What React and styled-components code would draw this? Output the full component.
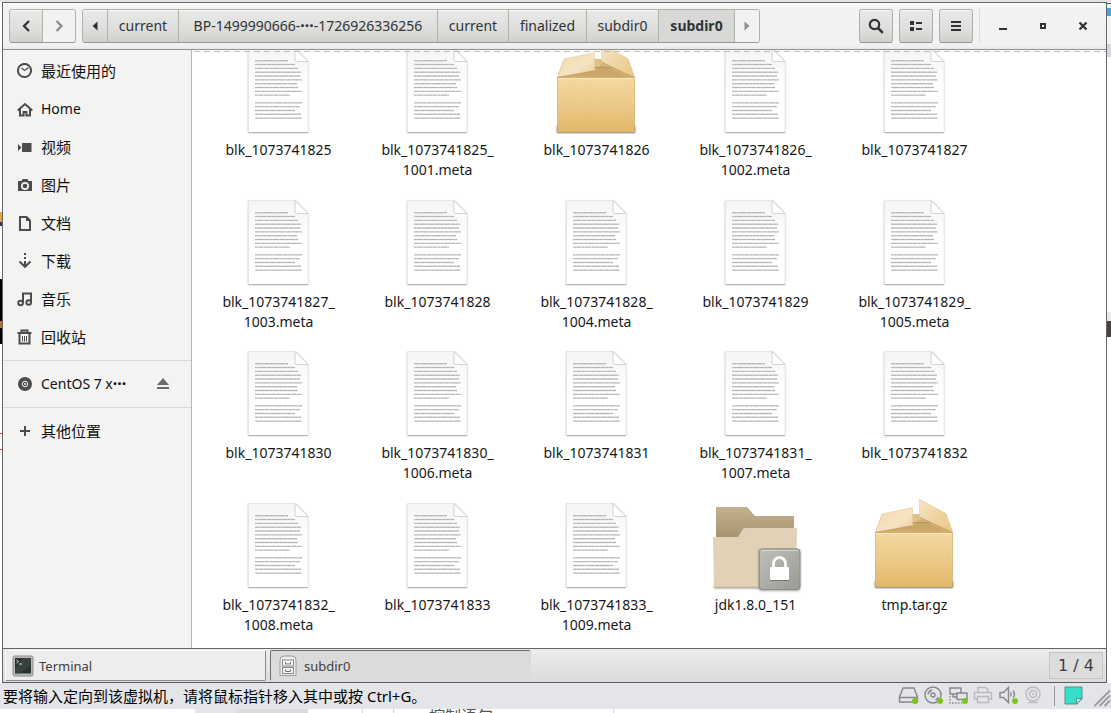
import React from "react";
import styled, { createGlobalStyle, css } from "styled-components";

const uiFont = `"Noto Sans", "Noto Sans CJK SC", sans-serif`;

const GlobalStyle = createGlobalStyle`
  *, *::before, *::after { box-sizing: border-box; }
  html, body { margin: 0; padding: 0; }
  body { font-family: ${uiFont}; font-size: 14px; color: #1c1f20; background: #fff; overflow: hidden; }
  button { font: inherit; color: inherit; margin: 0; padding: 0; border: 0; background: none; cursor: pointer; }
  ul, ol { list-style: none; margin: 0; padding: 0; }
  a { color: inherit; text-decoration: none; }
  svg { display: block; flex: none; }
`;

/* ---------- page frame ---------- */
const Page = styled.div`
  display: flex;
  flex-direction: column;
  height: 100vh;
`;
const Desktop = styled.div`
  flex: 1;
  min-height: 0;
  display: grid;
  grid-template-columns: 2px minmax(0, 1fr) 4px;
`;
const LeftEdge = styled.div`
  background: linear-gradient(
    #fff 210px, #f0a040 210px 220px, #223a66 220px 224px, #fff 224px 277px,
    #000 277px 319px, #b87420 319px 326px, #000 326px 342px, #fff 342px 431px,
    #e33 431px 432px, #fff 432px 447px, #e33 447px 448px, #fff 448px);
`;
const RightEdge = styled.div`
  background: linear-gradient(
    #eee 1px, #c33 1px 2px, #eee 2px 6px, #4aa3df 6px 14px, #f4f4f4 14px 42px,
    #d8d8dc 42px 55px, #fff 55px 310px, #e8e8e8 310px 319px, #45433a 319px 335px, #fff 335px);
`;
const Frame = styled.div`
  display: flex;
  flex-direction: column;
  min-width: 0;
  min-height: 0;
  border: 1px solid #666;
  border-bottom-color: #5c5c5c;
`;
const TopStrip = styled.div`
  height: 2px;
  background: #e3e3e3;
`;

/* ---------- header bar ---------- */
const HeaderBar = styled.header`
  display: flex;
  align-items: center;
  height: 47px;
  padding: 0 3px 0 6px;
  background: linear-gradient(#fcfcfc, #f3f3f3 4px, #f2f2f2 42px, #e8e8e8);
  border-bottom: 1px solid #92928e;
`;
const raised = css`
  background: linear-gradient(#e9e9e7, #dededc 60%, #d0d0cd);
  box-shadow: inset 0 1px #f8f8f7;
`;
const ButtonGroup = styled.nav`
  display: flex;
  height: 34px;
  margin-right: 6px;
  border: 1px solid #b1b1ae;
  border-bottom-color: #979792;
  border-radius: 3px;
  overflow: hidden;
`;
const GroupButton = styled.button`
  display: flex;
  align-items: center;
  justify-content: center;
  width: ${(p) => p.$w}px;
  line-height: 20px;
  color: #2e3436;
  white-space: nowrap;
  ${raised}
  & + & { border-left: 1px solid #b1b1ae; }
  ${(p) => p.$current && css`
    background: #d8d8d6;
    box-shadow: none;
    font-weight: 700;
  `}
  &:disabled { background: #f2f2f1; box-shadow: none; color: #8b8e8f; }
`;
const Ellipsis = styled.span`
  font-size: 16px;
  font-weight: 700;
  line-height: 16px;
`;
const Spacer = styled.div`
  flex: 1;
`;
const ToolButton = styled.button`
  display: flex;
  align-items: center;
  justify-content: center;
  width: 34px;
  height: 34px;
  margin-right: 6px;
  border: 1px solid #b1b1ae;
  border-bottom-color: #979792;
  border-radius: 3px;
  color: #2e3436;
  ${raised}
`;
const WindowControls = styled.div`
  display: flex;
  height: 34px;
  border-left: 1px solid #dcdcda;
  padding-left: 3px;
`;
const WindowButton = styled.button`
  display: flex;
  align-items: center;
  justify-content: center;
  width: 40px;
  color: #2e3436;
`;

/* ---------- body ---------- */
const Body = styled.div`
  flex: 1;
  min-height: 0;
  display: flex;
`;
const Sidebar = styled.nav`
  width: 189px;
  padding-top: 2px;
  background: #f3f3f2;
  border-right: 1px solid #b6b6b3;
`;
const PlaceGroup = styled.ul`
  & + & {
    margin-top: 4px;
    padding-top: 4px;
    border-top: 1px solid #dadad8;
  }
`;
const Place = styled.li`
  display: flex;
  align-items: center;
  height: 38px;
  padding: 0 20px 0 14px;
`;
const PlaceLink = styled.a`
  flex: 1;
  display: flex;
  align-items: center;
  gap: 8px;
  font-size: ${(p) => (p.$cjk ? 15 : 14)}px;
  line-height: 20px;
  color: #111;
  white-space: nowrap;
  svg { color: #4b4d4d; }
`;
const EjectButton = styled.button`
  color: #686c6d;
`;
const Files = styled.main`
  flex: 1;
  min-width: 0;
  overflow: hidden;
  background: #fff;
`;
const ScrollEdge = styled.div`
  position: relative;
  height: 1px;
  margin-top: 1px;
  z-index: 1;
  background: repeating-linear-gradient(90deg, transparent 0 2px, #bdbdbb 2px 8px, transparent 8px 10px);
`;
const FileGrid = styled.ul`
  display: grid;
  grid-template-columns: repeat(auto-fill, 159px);
  grid-auto-rows: 152px 151px;
  padding: 0 112px 0 7px;
  margin-top: -8px;
`;
const FileItem = styled.li`
  display: flex;
  flex-direction: column;
  align-items: center;
  text-align: center;
  svg { margin-right: 2px; }
`;
const FileName = styled.span`
  line-height: 20px;
  color: #161819;
  white-space: pre-line;
`;

/* ---------- taskbar ---------- */
const Taskbar = styled.footer`
  display: flex;
  align-items: center;
  gap: 4px;
  height: 34px;
  padding: 0 3px 0 2px;
  background: linear-gradient(#ececec, #dcdcdc);
  border-top: 1px solid #666;
`;
const Task = styled.button`
  display: flex;
  align-items: center;
  gap: 5px;
  width: 261px;
  height: 31px;
  padding-left: 6px;
  font-size: 13px;
  color: #3c4042;
  text-align: left;
  background: #ededed;
  border: 1px solid #8c8c8c;
  border-top-color: #fafafa;
  border-left-color: #fafafa;
  border-radius: 2px;
  ${(p) => p.$active && css`
    background: #dbdbdb;
    border-color: #6e6e6e #dbdbdb #dbdbdb #6e6e6e;
  `}
`;
const Pager = styled.button`
  width: 54px;
  height: 27px;
  font-family: "DejaVu Sans", sans-serif;
  font-size: 16px;
  line-height: 20px;
  color: #3c4042;
  background: #dddddd;
  border: 1px solid #c4c4c4;
`;

/* ---------- host status line ---------- */
const StatusBar = styled.div`
  display: flex;
  align-items: center;
  justify-content: space-between;
  height: 26px;
  padding-left: 3px;
  background: #e4e5e8;
`;
const StatusText = styled.p`
  margin: 0;
  font-size: 15px;
  line-height: 24px;
  color: #000;
  white-space: nowrap;
`;
const Devices = styled.div`
  display: flex;
  align-items: center;
  gap: 3px;
`;
const Divider = styled.span`
  width: 1px;
  height: 20px;
  margin: 0 6px;
  background: #9b9ca0;
`;
const HostStrip = styled.div`
  display: flex;
  height: 4px;
  overflow: hidden;
  padding-left: 195px;
  background: #fff;
  font-size: 16px;
  line-height: 14px;
  color: #555;
`;
const HostCell = styled.span`
  width: ${(p) => p.$w}px;
  height: 4px;
  background: ${(p) => p.$bg};
  border-right: 1px solid #d6d6d9;
  padding-left: ${(p) => (p.$text ? 35 : 0)}px;
`;

/* ---------- drawings ---------- */
const Svg = ({ s = 16, children, ...rest }) => (
  <svg width={s} height={s} viewBox={`0 0 ${s} ${s}`} fill="none" aria-hidden="true" {...rest}>
    {children}
  </svg>
);
const ink = { stroke: "currentColor", strokeWidth: 2 };

const icons = {
  recent: <><circle cx="7.5" cy="7.5" r="6.6" {...ink} /><path d="M4.5 5 7.5 7.5 11.5 4.5" stroke="currentColor" strokeWidth="1.2" /></>,
  home: <><path d="M.7 9.4 8 3l7.3 6.4" {...ink} /><path d="M3 8v6.500h3.600V11h2.800v3.500H13V8" {...ink} /></>,
  video: <path d="M5 4h9.500v9H5zM1 5l3.500 3.500L1 12z" fill="currentColor" />,
  photo: <><path fillRule="evenodd" d="M1 4h3.500l1-2h5l1 2H15v10H1zM8 5a4 4 0 1 0 0 8 4 4 0 0 0 0-8z" fill="currentColor" /><circle cx="8" cy="9" r="2.300" fill="currentColor" /></>,
  doc: <><path d="M3 2h6.500L13 5.500V15H3z" {...ink} /><path d="M9 1v5h5z" fill="currentColor" /></>,
  download: <><path d="M8 0v2M8 4v2M8 8v6" {...ink} /><path d="M2.500 8.500 8 13.800l5.500-5.300" {...ink} /></>,
  music: <><path d="M6 12V2.500h8V11" {...ink} /><circle cx="3.600" cy="12" r="2.300" {...ink} /><circle cx="11.700" cy="11.500" r="2.300" {...ink} /></>,
  trash: <><path d="M.500 4h14M4.500 3V1.500h6V3" {...ink} /><path d="M2.500 5v9.500h10V5" {...ink} /><path d="M5.500 7v5.500M7.500 7v5.500M9.500 7v5.500" stroke="currentColor" strokeWidth="1" /></>,
  disc: <><circle cx="8" cy="8" r="7" fill="currentColor" /><circle cx="8" cy="8" r="2.800" stroke="#f3f3f2" strokeWidth="1" /><circle cx="8" cy="8" r="1" fill="#f3f3f2" /></>,
  plus: <path d="M8 3v10M3 8h10" {...ink} />,
};

const DocumentIcon = () => (
  <Svg s={96}>
    <defs>
      <linearGradient id="paper" x1="0" y1="0" x2="0" y2="1">
        <stop offset="0" stopColor="#f5f5f3" /><stop offset=".5" stopColor="#fff" />
      </linearGradient>
      <filter id="soft"><feGaussianBlur stdDeviation=".8" /></filter>
    </defs>
    <path d="M18 5h48l12 13v71H18z" fill="#999" opacity=".5" filter="url(#soft)" />
    <path d="M18.500 4.500h46.500l13 13V88.500H18.500z" fill="url(#paper)" stroke="#e0e0de" strokeWidth=".6" />
    <path d="M18.500 88.500H78" stroke="#b4b4b4" />
    <path d="M65 4.500 78 17.500H66.500q-1.500 0-1.500-1.500z" fill="#fff" stroke="#c8c8c6" strokeWidth=".8" />
    {[33, 40, 43, 46, 45, 47, 42, 43, 47, 35, null, 47, 45, 40, 46, 47].map((w, i) =>
      w ? (
        <g key={i}>
          <path d={`M25 ${16.7 + i * 3.83}h${w}`} stroke="#d2d2d1" strokeWidth="1.400" />
          <path d={`M25 ${16.7 + i * 3.83}h${w}`} stroke="#8c8c8b" strokeWidth=".8" strokeDasharray="4 1 2.500 .8 6 1" strokeDashoffset={i * 3} opacity=".55" />
        </g>
      ) : null
    )}
  </Svg>
);

const PackageIcon = () => (
  <Svg s={96}>
    <defs>
      <linearGradient id="boxFront" x1="0" y1="0" x2="0" y2="1">
        <stop offset="0" stopColor="#f5d9a0" /><stop offset=".5" stopColor="#edcb8b" /><stop offset="1" stopColor="#e2b869" />
      </linearGradient>
      <linearGradient id="flapLeft" x1="0" y1="0" x2="1" y2="1">
        <stop offset="0" stopColor="#f2d9ab" /><stop offset=".6" stopColor="#f5e3c2" /><stop offset="1" stopColor="#e9cc98" />
      </linearGradient>
      <linearGradient id="flapRight" x1="0" y1="0" x2="1" y2="1">
        <stop offset="0" stopColor="#f6e5c6" /><stop offset="1" stopColor="#e8c583" />
      </linearGradient>
      <filter id="boxShade"><feGaussianBlur stdDeviation="1.3" /></filter>
    </defs>
    <path d="M9 82h78v7H9z" fill="#444" opacity=".75" filter="url(#boxShade)" />
    <path d="M16 15h64l7 19H9z" fill="#d4b273" />
    <path d="M42 15h28v8H42z" fill="#dec08a" />
    <path d="M42 23.500h26" stroke="#b8975d" />
    <path d="M24 32 46 27l8-7 26 13z" fill="#b8965b" opacity=".4" />
    <path d="M9.500 33.500h77V88h-77z" fill="url(#boxFront)" stroke="#c99f57" strokeWidth=".6" />
    {Array.from({ length: 24 }, (_, i) => (
      <path key={i} d={`M${12 + i * 3.1} 40v46`} stroke="#d3a75c" opacity=".08" />
    ))}
    <path d="M10 34.500h76" stroke="#f9e7c4" />
    <path d="M9.500 33.500 16 15l30.500-6.500v18z" fill="url(#flapLeft)" stroke="#e0c492" strokeWidth=".5" />
    <path d="M53 0 80 14.500l6.500 19L54 18.500z" fill="url(#flapRight)" stroke="#e0c492" strokeWidth=".5" />
    <path d="M9.500 33.500 46 27M54 18.500l32 15" stroke="#c1955a" strokeWidth=".8" />
  </Svg>
);

const LockedFolderIcon = () => (
  <Svg s={96}>
    <defs>
      <linearGradient id="folderBack" x1="0" y1="0" x2="0" y2="1">
        <stop offset="0" stopColor="#c4b18d" /><stop offset="1" stopColor="#a3906c" />
      </linearGradient>
      <linearGradient id="lockPlate" x1="0" y1="0" x2="1" y2="1">
        <stop offset="0" stopColor="#bdc0b9" /><stop offset="1" stopColor="#989c94" />
      </linearGradient>
      <filter id="folderShade"><feGaussianBlur stdDeviation="1" /></filter>
    </defs>
    <path d="M7 84h82v6H7z" fill="#777" opacity=".5" filter="url(#folderShade)" />
    <path d="M9 9q0-1 1-1h30l8 9h38q1 0 1 1v24H9z" fill="url(#folderBack)" />
    <path d="M6 39q0-1 1-1h24l5-8q.500-1 2-1h51q1 0 1 1l-1 58.500H7z" fill="#e2d0b7" />
    <path d="M7 88.300h82" stroke="#c9ab88" />
    <rect x="51.500" y="50" width="42" height="42" rx="3" fill="#555" opacity=".5" filter="url(#folderShade)" />
    <rect x="52.500" y="50" width="40.500" height="40.500" rx="3" fill="url(#lockPlate)" stroke="#8a8e87" />
    <path d="M54 51.500h37" stroke="#d4d6d1" />
    <path d="M66.500 70v-5.500a6 6 0 0 1 12 0V70" stroke="#fff" strokeWidth="2.800" />
    <rect x="63" y="68" width="19" height="13" rx="1" fill="#fff" />
    <path d="M63 81.500h19" stroke="#777" />
  </Svg>
);

const fileIcons = { text: DocumentIcon, archive: PackageIcon, locked: LockedFolderIcon };

const TerminalIcon = () => (
  <Svg s={22}>
    <rect x="1" y="1" width="20" height="20" rx="1.500" fill="#b9bcb8" stroke="#8b8e8a" />
    <rect x="3" y="3" width="16" height="15.500" fill="#2b3332" />
    <path d="M11 3h8v7L7 18.500H3V14z" fill="#435150" opacity=".5" />
    <path d="m4.500 5 2 1.500-2 1.500M7 9h3" stroke="#d4dad6" />
  </Svg>
);
const CabinetIcon = () => (
  <Svg s={22}>
    <path d="M3 5q0-4 4-4h8q4 0 4 4v15.500H3z" fill="#eeeeec" stroke="#9a9c98" />
    <rect x="5.500" y="5" width="11" height="6" fill="#f8f8f7" stroke="#888a85" />
    <rect x="5.500" y="12.500" width="11" height="6" fill="#f8f8f7" stroke="#888a85" />
    <path d="M8.500 7v2h5V7M8.500 14.500v2h5v-2" stroke="#70736e" />
  </Svg>
);

const Dot = () => <circle cx="17" cy="16" r="3" fill="#7ac51c" />;
const grey = { stroke: "#85868a", strokeWidth: 1.4 };
const pale = { stroke: "#b9babd", strokeWidth: 1.4 };
const devices = {
  "Hard disk": <><path d="M5 3h11l3.500 9v5H1.500v-5zM1.500 12.500h18" {...grey} /><Dot /></>,
  "CD/DVD": <><circle cx="10" cy="10" r="8" {...grey} /><circle cx="10" cy="10" r="2" {...grey} /><path d="M5 9.500Q5.500 6 9 5M12.500 15q2-.500 2.500-3" {...grey} /><Dot /></>,
  Network: <><path d="M2 11v7h12" {...grey} strokeDasharray="1.500 1.500" /><path d="M2 3h11v6H2z" {...grey} /><path d="M9 8h10v6.500H9z" {...grey} fill="#e4e5e8" /><path d="M5 9v3h4" {...grey} /><Dot /></>,
  Printer: <><path d="M5 7V2.500h8L15 5v2M4.500 14H1.500V7.500h17V14h-3M4.500 11.500h11v6h-11z" {...pale} /></>,
  Sound: <><path d="M2 7.500h3.500l5-5v15l-5-5H2z" {...grey} /><path d="M12.500 7.500q1.500 2 0 4M15 5.500q3 4 0 7" {...grey} /><Dot /></>,
  Camera: <><circle cx="10" cy="9" r="7" {...pale} /><circle cx="10" cy="9" r="3.500" {...pale} /><circle cx="10" cy="9" r="1" fill="#b9babd" /><path d="M5 17.500h10" {...pale} /></>,
};

/* ---------- data ---------- */
const crumbs = [
  { label: "current", w: 71 },
  { label: <span>BP-1499990666-<Ellipsis>···</Ellipsis>-1726926336256</span>, w: 259 },
  { label: "current", w: 71 },
  { label: "finalized", w: 78 },
  { label: "subdir0", w: 72 },
  { label: "subdir0", w: 76, current: true },
];
const places = [
  ["recent", "最近使用的"], ["home", "Home"], ["video", "视频"], ["photo", "图片"],
  ["doc", "文档"], ["download", "下载"], ["music", "音乐"], ["trash", "回收站"],
];
const files = [
  ["text", "blk_1073741825"], ["text", "blk_1073741825_\n1001.meta"], ["archive", "blk_1073741826"],
  ["text", "blk_1073741826_\n1002.meta"], ["text", "blk_1073741827"],
  ["text", "blk_1073741827_\n1003.meta"], ["text", "blk_1073741828"], ["text", "blk_1073741828_\n1004.meta"],
  ["text", "blk_1073741829"], ["text", "blk_1073741829_\n1005.meta"],
  ["text", "blk_1073741830"], ["text", "blk_1073741830_\n1006.meta"], ["text", "blk_1073741831"],
  ["text", "blk_1073741831_\n1007.meta"], ["text", "blk_1073741832"],
  ["text", "blk_1073741832_\n1008.meta"], ["text", "blk_1073741833"], ["text", "blk_1073741833_\n1009.meta"],
  ["locked", "jdk1.8.0_151"], ["archive", "tmp.tar.gz"],
];

const PlaceRow = ({ icon, cjk = true, label, children }) => (
  <Place>
    <PlaceLink href="#" $cjk={cjk}>
      <Svg>{icons[icon]}</Svg>
      {label}
    </PlaceLink>
    {children}
  </Place>
);

export default function App() {
  return (
    <Page>
      <GlobalStyle />
      <TopStrip />
      <Desktop>
        <LeftEdge />
        <Frame>
          <HeaderBar>
            <ButtonGroup>
              <GroupButton $w={32} aria-label="Back"><Svg><path d="M11 3 6 8l5 5" stroke="currentColor" strokeWidth="2.300" /></Svg></GroupButton>
              <GroupButton $w={33} disabled aria-label="Forward"><Svg><path d="m5.500 3 5 5-5 5" stroke="currentColor" strokeWidth="2.300" /></Svg></GroupButton>
            </ButtonGroup>
            <ButtonGroup>
              <GroupButton $w={24} aria-label="Earlier folders"><Svg><path d="M10.500 3.500v9L5.500 8z" fill="currentColor" /></Svg></GroupButton>
              {crumbs.map((c, i) => (
                <GroupButton key={i} $w={c.w} $current={c.current}>{c.label}</GroupButton>
              ))}
              <GroupButton $w={25} disabled aria-label="Later folders"><Svg><path d="M5.500 3.500v9L10.500 8z" fill="currentColor" /></Svg></GroupButton>
            </ButtonGroup>
            <Spacer />
            <ToolButton aria-label="Search"><Svg><circle cx="6.500" cy="6.500" r="4.700" {...ink} strokeWidth="2.200" /><path d="m10 10 4.800 4.800" {...ink} strokeWidth="2.600" /></Svg></ToolButton>
            <ToolButton aria-label="List view"><Svg><path d="M2 3h4v4H2zM2 9h4v4H2zM8 4h6v2H8zM8 10h6v2H8z" fill="currentColor" /></Svg></ToolButton>
            <ToolButton aria-label="Menu"><Svg><path d="M3 3h10v2H3zM3 7h10v2H3zM3 11h10v2H3z" fill="currentColor" /></Svg></ToolButton>
            <WindowControls>
              <WindowButton aria-label="Minimize"><Svg><path d="M4 10h8v2H4z" fill="currentColor" /></Svg></WindowButton>
              <WindowButton aria-label="Maximize"><Svg><path d="M6 6h4v4H6z" {...ink} /></Svg></WindowButton>
              <WindowButton aria-label="Close"><Svg><path d="m4.500 4.500 7 7M11.500 4.500l-7 7" {...ink} strokeWidth="2.200" /></Svg></WindowButton>
            </WindowControls>
          </HeaderBar>
          <Body>
            <Sidebar>
              <PlaceGroup>
                {places.map(([icon, label]) => (
                  <PlaceRow key={label} icon={icon} label={label} cjk={label !== "Home"} />
                ))}
              </PlaceGroup>
              <PlaceGroup>
                <PlaceRow icon="disc" cjk={false} label={<span>CentOS 7 x<Ellipsis>···</Ellipsis></span>}>
                  <EjectButton aria-label="Eject"><Svg><path d="M8 2 14 9H2zM2 11h12v2H2z" fill="currentColor" /></Svg></EjectButton>
                </PlaceRow>
              </PlaceGroup>
              <PlaceGroup>
                <PlaceRow icon="plus" label="其他位置" />
              </PlaceGroup>
            </Sidebar>
            <Files>
              <ScrollEdge />
              <FileGrid>
                {files.map(([kind, name]) => {
                  const Icon = fileIcons[kind];
                  return (
                    <FileItem key={name}>
                      <Icon />
                      <FileName>{name}</FileName>
                    </FileItem>
                  );
                })}
              </FileGrid>
            </Files>
          </Body>
          <Taskbar>
            <Task><TerminalIcon />Terminal</Task>
            <Task $active><CabinetIcon />subdir0</Task>
            <Spacer />
            <Pager>1 / 4</Pager>
          </Taskbar>
        </Frame>
        <RightEdge />
      </Desktop>
      <StatusBar>
        <StatusText>要将输入定向到该虚拟机，请将鼠标指针移入其中或按 Ctrl+G。</StatusText>
        <Devices>
          {Object.entries(devices).map(([name, art]) => (
            <Svg key={name} s={22}>{art}</Svg>
          ))}
          <Divider />
          <Svg s={22}><path d="M1 2h17v12l-5 5H1z" fill="#35dfc9" stroke="#5b8f8a" /><path d="M18 13.500h-5.500V19z" fill="#b4f4ea" stroke="#5b8f8a" /></Svg>
          <Svg s={22}><path d="M5.500 21 21 5.500M10.500 21 21 10.500M15.500 21l5.500-5.500" stroke="#9a9b9e" strokeWidth="1.800" /></Svg>
        </Devices>
      </StatusBar>
      <HostStrip>
        <HostCell $w={42} $bg="#e4e4ea" />
        <HostCell $w={71} $bg="#dcdcdf" />
        <HostCell $w={55} $bg="#fff" />
        <HostCell $w={31} $bg="#fff" />
        <HostCell $w={220} $bg="#fff" $text>控制语句</HostCell>
      </HostStrip>
    </Page>
  );
}
